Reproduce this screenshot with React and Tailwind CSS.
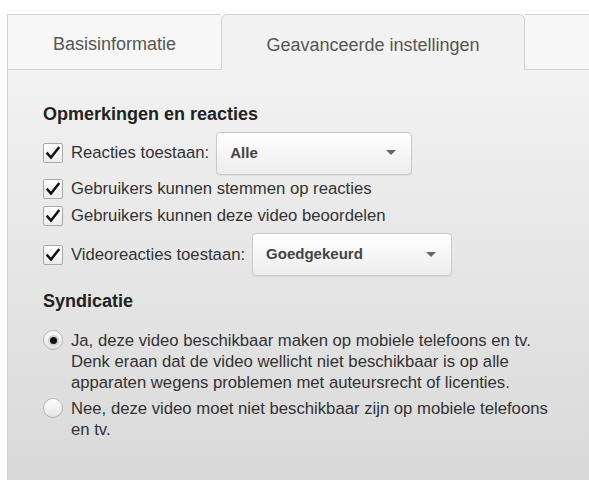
import React from "react";

function Check() {
  return (
    <span className="flex h-[20px] w-[20px] shrink-0 items-center justify-center rounded-[2px] border border-[#a9a9a9] bg-gradient-to-b from-white to-[#ececec]">
      <svg width="16" height="16" viewBox="0 0 16 16">
        <path d="M2.5 8.5 L6 12.5 L13.5 3" fill="none" stroke="#111" strokeWidth="2.5" strokeLinecap="square" strokeLinejoin="miter" />
      </svg>
    </span>
  );
}

function Radio({ checked }) {
  return (
    <span className="flex h-[20px] w-[20px] shrink-0 items-center justify-center rounded-full border border-[#b5b5b5] bg-gradient-to-b from-white to-[#e4e4e4] shadow-[inset_0_1px_1px_rgba(255,255,255,0.9)]">
      {checked && <span className="h-[7px] w-[7px] rounded-full bg-[#111] shadow-[0_0_0_2px_#cfcfcf]" />}
    </span>
  );
}

function Select({ label, width }) {
  return (
    <div
      className={`flex h-[43px] items-center justify-between rounded-[4px] border border-[#c9c9c9] bg-gradient-to-b from-white to-[#ededed] pl-[13px] pr-[15px] shadow-[0_1px_1px_rgba(0,0,0,0.06)] ${width}`}
    >
      <span className="text-[15px] font-bold text-[#444]">{label}</span>
      <svg width="10" height="6" viewBox="0 0 10 6">
        <path d="M0 0 L10 0 L5 5 Z" fill="#666" />
      </svg>
    </div>
  );
}

export default function App() {
  return (
    <div className="min-h-[480px] bg-white pl-[7px] pt-[14px] text-[#333]" style={{ fontFamily: '"Liberation Sans", Arial, sans-serif' }}>
      <div className="flex h-[56px] text-[18px] text-[#555]">
        <div className="flex w-[214px] items-center justify-center border-l border-t border-b border-[#d4d4d4] bg-[#f7f7f7] pt-[5px]">
          Basisinformatie
        </div>
        <div className="flex w-[304px] items-center justify-center rounded-t-[6px] border-l border-r border-t border-[#d0d0d0] bg-[#f2f2f2] pt-[5px]">
          Geavanceerde instellingen
        </div>
        <div className="flex-1 border-t border-b border-[#d4d4d4] bg-[#f7f7f7]" />
      </div>
      <div className="min-h-[410px] border-l border-[#d4d4d4] bg-gradient-to-b from-[#f2f2f2] to-[#d9d9d9] pl-[35px] pt-[33px] text-[16.7px]">
        <h2 className="h-[22px] text-[18px] font-bold leading-[22px] text-[#222]">Opmerkingen en reacties</h2>
        <div className="mt-[6px] flex h-[44px] items-center">
          <Check />
          <span className="ml-[8px]">Reacties toestaan:</span>
          <div className="ml-[7px]">
            <Select label="Alle" width="w-[196px]" />
          </div>
        </div>
        <div className="flex h-[27px] items-center">
          <Check />
          <span className="ml-[8px]">Gebruikers kunnen stemmen op reacties</span>
        </div>
        <div className="flex h-[28px] items-center">
          <Check />
          <span className="ml-[8px]">Gebruikers kunnen deze video beoordelen</span>
        </div>
        <div className="mt-[3px] flex h-[43px] items-center">
          <Check />
          <span className="ml-[8px]">Videoreacties toestaan:</span>
          <div className="ml-[7px]">
            <Select label="Goedgekeurd" width="w-[200px]" />
          </div>
        </div>
        <h2 className="mt-[14px] h-[22px] text-[18px] font-bold leading-[22px] text-[#222]">Syndicatie</h2>
        <div className="mt-[18px] flex items-start">
          <Radio checked />
          <p className="ml-[8px] w-[490px] leading-[21px]">
            Ja, deze video beschikbaar maken op mobiele telefoons en tv. Denk eraan dat de video wellicht niet beschikbaar is op alle apparaten wegens problemen met auteursrecht of licenties.
          </p>
        </div>
        <div className="mt-[5px] flex items-start">
          <Radio />
          <p className="ml-[8px] w-[490px] leading-[21px]">
            Nee, deze video moet niet beschikbaar zijn op mobiele telefoons en tv.
          </p>
        </div>
      </div>
    </div>
  );
}
